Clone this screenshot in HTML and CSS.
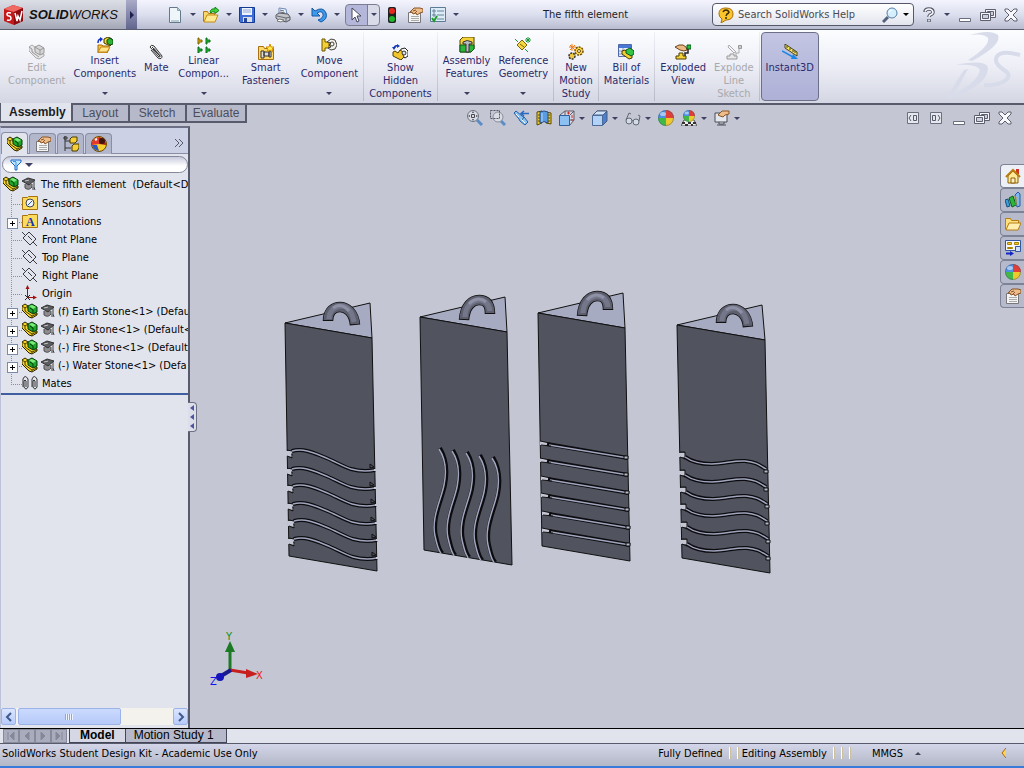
FILE: index.html
```html
<!DOCTYPE html>
<html lang="en">
<head>
    <meta charset="UTF-8">
    <meta name="viewport" content="width=device-width, initial-scale=1.0">
    <title>SolidWorks - The fifth element</title>
    <link rel="stylesheet" href="styles.css">
</head>
<body>
    <!-- Icon sprite -->
    <svg class="sprite" aria-hidden="true">
        <symbol id="asm" viewBox="0 0 16 16">
            <path d="M0 3l3-2 3 2v3l4 4h5v2l-5 3-3-1-7-7z" fill="#f6d42c" stroke="#2b2400"/>
            <path d="M0 3l3 2 3-2M3 5v3l7 5 5-2M10 13v2" fill="none" stroke="#4a3c00"/>
            <path d="M6 3l4-2 5 3v5l-4 2-5-3z" fill="#1fa52b" stroke="#06380a"/>
            <path d="M7 3l3-1 4 2-3 2z" fill="#7bea78"/>
            <path d="M8 5l3 2v3" fill="none" stroke="#06380a"/>
        </symbol>
        <symbol id="asm-off" viewBox="0 0 16 16">
            <path d="M0 3l3-2 3 2v3l4 4h5v2l-5 3-3-1-7-7z" fill="#e6e6e8" stroke="#aaa"/>
            <path d="M6 3l4-2 5 3v5l-4 2-5-3zM6 3l5 3v5M11 6l4-2M0 3l3 2v3l7 5" fill="#d6d6d8" stroke="#999"/>
        </symbol>
        <symbol id="cap" viewBox="0 0 16 16">
            <path d="M4 8v4q4 3 7-1V8" fill="#8d8d90" stroke="#4c4c4e"/>
            <path d="M1 5l6-3 7 2-6 5z" fill="#5c5d61" stroke="#333335"/>
            <path d="M13 5v6l1 3M12 11v3M4 5l4-2" fill="none" stroke="#3c3c3e"/>
            <path d="M4 5l4-1" stroke="#ccc"/>
        </symbol>
        <symbol id="new" viewBox="0 0 16 16">
            <path d="M2.500 .500h8l3 3v12h-11z" fill="#eef6fa" stroke="#647a8a"/>
            <path d="M10.500 .500v3h3M4 14h8" fill="#b9cfe0" stroke="#89a3b6"/>
        </symbol>
        <symbol id="open" viewBox="0 0 16 16">
            <path d="M.500 14.500v-10h4l1 2h6v3" fill="#f8d868" stroke="#b17a10"/>
            <path d="M1 15l3-7h11l-3 7z" fill="#ffe991" stroke="#c48a18"/>
            <path d="M7 5q1-4 5-3V0l4 3.500-4 3V5q-3-1-4 1z" fill="#45cf3c" stroke="#0a8a12"/>
        </symbol>
        <symbol id="save" viewBox="0 0 16 16">
            <path d="M.500 .500h15v15h-14l-1-1z" fill="#3e6fd8" stroke="#123a92"/>
            <path d="M3 1h10v7H3z" fill="#edf3ff"/>
            <path d="M4 3h8M4 5h8" stroke="#95a9d4"/>
            <path d="M4 10h9v5H4z" fill="#d9dde6"/>
            <path d="M5 11h3v4H5z" fill="#24479a"/>
        </symbol>
        <symbol id="print" viewBox="0 0 16 16">
            <path d="M4 1l7 1 1 6-8-1z" fill="#e9f2ff" stroke="#6f8bb5"/>
            <path d="M1 8l3-2 9 1 2 3v3l-4 2-9-3-1-1z" fill="#c2c4ca" stroke="#55585f"/>
            <path d="M2 9l9 2 4-1M11 11v4M5 3l4 1M5 5l5 1" fill="none" stroke="#666a74"/>
            <path d="M4 12l5 1-3 2-4-1z" fill="#fff" stroke="#777"/>
        </symbol>
        <symbol id="undo" viewBox="0 0 16 16">
            <path d="M1 1v8h8L6 6q5-3 6 1 1 4-5 6l3 2q7-3 5-9-3-7-11-2z" fill="#3f9bea" stroke="#1257a8"/>
        </symbol>
        <symbol id="cursor" viewBox="0 0 16 16">
            <path d="M3 1v12l3-3 2 5 2-1-2-5h4z" fill="#fff" stroke="#46465a"/>
        </symbol>
        <symbol id="light" viewBox="0 0 16 16">
            <rect x="4" y="0" width="8" height="16" rx="2" fill="#1d211d"/>
            <circle cx="8" cy="4" r="3" fill="#e8281f"/>
            <circle cx="8" cy="12" r="3" fill="#21b52c"/>
        </symbol>
        <symbol id="props" viewBox="0 0 16 16">
            <path d="M1.500 5.500h12v10h-12z" fill="#f4f4f4" stroke="#77777c"/>
            <path d="M4 9.500h8M4 11.500h8M4 13.500h8" stroke="#aaa"/>
            <path d="M3 5l4-4h6l3 1v3l-3 1-3 2-1-2-3 1-1-2z" fill="#edbd8b" stroke="#8a5526"/>
            <path d="M6 4l3-1M8 6l2-2" stroke="#8a5526"/>
        </symbol>
        <symbol id="options" viewBox="0 0 16 16">
            <path d="M.500 .500h15v14H.500z" fill="#dcebf5" stroke="#5c7b94"/>
            <path d="M3 3h2v2H3zM3 7h2v2H3z" fill="none" stroke="#65839c"/>
            <path d="M7 4h7M7 8h7M7 12h7" stroke="#65839c"/>
            <path d="M2 11l2 3 3-5" fill="none" stroke="#1e9c2b" stroke-width="2"/>
        </symbol>
        <symbol id="bubble" viewBox="0 0 16 16">
            <path d="M8 1C3 1 1 3 1 7q0 3 3 5l-1 4 5-3q7 0 7-6T8 1z" fill="#fbc52c" stroke="#a86f08"/>
            <path d="M5 5q1-2 3-2t3 2q0 1-2 2l-1 2M8 10v2" fill="none" stroke="#3b2b00" stroke-width="1.500"/>
        </symbol>
        <symbol id="lens" viewBox="0 0 16 16">
            <path d="M1 15l5-5" stroke="#53637c" stroke-width="3"/>
            <circle cx="10" cy="6" r="5" fill="#d6efff" stroke="#567ea8"/>
            <path d="M7 6q0-3 3-3" fill="none" stroke="#fff"/>
        </symbol>
        <symbol id="help" viewBox="0 0 16 16">
            <path d="M4 5q0-3 4-3t4 3q0 2-3 3-1 1-1 2M8 12v3" fill="none" stroke="#555866" stroke-width="3.500"/>
            <path d="M4 4.500q1-2.500 4-2.500t4 3q0 2-3 3-1 1-1 2M8 12.500v2" fill="none" stroke="#fafafe" stroke-width="1.500"/>
        </symbol>
        <symbol id="min" viewBox="0 0 16 16">
            <path d="M2.500 11.500h11v3h-11z" fill="#fff" stroke="#696c7a"/>
        </symbol>
        <symbol id="restore" viewBox="0 0 16 16">
            <path d="M5.500 2.500h10v8h-10z" fill="#f6f6fa" stroke="#5c5f6d"/>
            <path d="M7.500 4.500h6v4h-6z" fill="#cdd0dc" stroke="#5c5f6d"/>
            <path d="M.500 5.500h10v8H.500z" fill="#f6f6fa" stroke="#5c5f6d"/>
            <path d="M2.500 7.500h6v4h-6z" fill="#cdd0dc" stroke="#5c5f6d"/>
        </symbol>
        <symbol id="close" viewBox="0 0 16 16">
            <path d="M2 2h3l3 3 3-3h3v2l-4 4 4 4v2h-3l-3-3-3 3H2v-2l4-4-4-4z" fill="#f8f8fc" stroke="#5c5f6d"/>
        </symbol>
        <symbol id="dock-l" viewBox="0 0 16 16">
            <path d="M2.500 2.500h11v11h-11z" fill="#e6e8ef" stroke="#6c707e"/>
            <path d="M8.500 5.500h3v5h-3zM6 5L4 8l2 3" fill="none" stroke="#555968"/>
        </symbol>
        <symbol id="dock-r" viewBox="0 0 16 16">
            <path d="M2.500 2.500h11v11h-11z" fill="#e6e8ef" stroke="#6c707e"/>
            <path d="M4.500 5.500h3v5h-3zM10 5l2 3-2 3" fill="none" stroke="#555968"/>
        </symbol>
        <symbol id="insert" viewBox="0 0 16 16">
            <path d="M1 6Q1 2 4 2" fill="none" stroke="#1230c8" stroke-width="1.500"/>
            <path d="M3 0l3 2-3 3z" fill="#1230c8"/>
            <path d="M7 2l4-2 4 2v5l-2 2-6-3z" fill="#f4d430" stroke="#3c3600"/>
            <path d="M10 3l3-2 3 2v4l-3 1-3-2z" fill="#2eb435" stroke="#0b4a10"/>
            <path d="M1 8h4l1 1h6v3l-2 4H1z" fill="#f8c73c" stroke="#a86a0c"/>
            <path d="M1 15l3-5h9l-3 5z" fill="#ffe48a" stroke="#c08412"/>
        </symbol>
        <symbol id="clip" viewBox="0 0 16 16">
            <path d="M5 5l7 7M3 6l7 8q4 2 4-2L6 2Q3 0 2 3M2 3l9 10q2 0 1-2L4 3" fill="none" stroke="#333"/>
            <path d="M6 4l7 8" stroke="#aaa"/>
        </symbol>
        <symbol id="pattern" viewBox="0 0 16 16">
            <path d="M2 1h1v2h3v2H3v2H2z" fill="#e8bc10" stroke="#806000"/>
            <path d="M10 1h1v2h3v2h-3v2h-1zM2 10h1v2h3v2H3v2H2zM10 10h1v2h3v2h-3v2h-1z" fill="#22c032" stroke="#08701a"/>
        </symbol>
        <symbol id="fasteners" viewBox="0 0 16 16">
            <path d="M.500 15.500v-13h5l1 2h9v11z" fill="#ffd965" stroke="#a8710e"/>
            <path d="M3 7h3v7H3zM6 8h5v4H6zM11 7h2v6h-2z" fill="#dedede" stroke="#333"/>
            <path d="M12 0l1 3 3 0-2 2 1 3-3-2-3 2 1-3-2-2h3z" fill="#fff04a" stroke="#d78b00"/>
        </symbol>
        <symbol id="move" viewBox="0 0 16 16">
            <path d="M1 2h3v3h4v6H4v3H1z" fill="#f3ce35" stroke="#6d5600"/>
            <path d="M6 5l4-3 4 1 2 5-2 4-4 1-3-2 3-1-2-2 2-2z" fill="#f4f0ea" stroke="#444"/>
            <circle cx="11" cy="7" r="2" fill="none" stroke="#444"/>
        </symbol>
        <symbol id="showhide" viewBox="0 0 16 16">
            <path d="M2 4q1-3 4-2" fill="none" stroke="#1636b8" stroke-width="1.500"/>
            <path d="M5 0l3 2-3 2zM0 3h4l-2 3z" fill="#1636b8"/>
            <path d="M9 5l4-1 3 3v5l-3 2-5-4z" fill="#fff" stroke="#222"/>
            <path d="M1 8l2-1 3 2 2-3 3 2v3l1 2-3 3-8-4z" fill="#f2c52d" stroke="#4f3e00"/>
            <circle cx="12" cy="9" r="2" fill="#ddd" stroke="#333"/>
        </symbol>
        <symbol id="features" viewBox="0 0 16 16">
            <path d="M1 3l3-3h11v12l-3 3H1z" fill="#f4d238" stroke="#514000"/>
            <path d="M1 8h14v4l-3 3H1z" fill="#2cb73a" stroke="#0b5818"/>
            <path d="M4 5q4-3 9 0v2h-3v8H7V7H4z" fill="#b9bcc2" stroke="#333"/>
        </symbol>
        <symbol id="refgeo" viewBox="0 0 16 16">
            <path d="M7 3l5 5-5 5-5-5z" fill="#f6d845" stroke="#7c6300"/>
            <path d="M5 7l4 3" stroke="#7c6300"/>
            <path d="M13 0v6M10 3h6M11 1l4 4M15 1l-4 4M0 2l3 3M10 12l3 3" stroke="#189838"/>
        </symbol>
        <symbol id="motion" viewBox="0 0 16 16">
            <circle cx="11" cy="7" r="4" fill="#ffd94c" stroke="#6d4f00" stroke-width="1.500" stroke-dasharray="2 1"/>
            <circle cx="11" cy="7" r="1.500" fill="#fff" stroke="#6d4f00"/>
            <circle cx="4" cy="12" r="3" fill="#f0c840" stroke="#333" stroke-width="1.500" stroke-dasharray="2 1"/>
            <path d="M4 0v7M1 3h7M2 1l5 5M7 1L2 6" stroke="#f27a10"/>
        </symbol>
        <symbol id="bom" viewBox="0 0 16 16">
            <path d="M.500 .500h13v12H.500z" fill="#e9edf8" stroke="#4f69a8"/>
            <path d="M1 1h12v3H1z" fill="#4977d6"/>
            <path d="M1 7h12M1 10h12M5 4v9" stroke="#8193bd"/>
            <path d="M4 7l3-1 7 5v3l-3 1-7-5z" fill="#f2cc30" stroke="#4b3c00"/>
            <path d="M8 6l4-2 4 3v3l-3 2-5-3z" fill="#35c545" stroke="#0b5818"/>
        </symbol>
        <symbol id="explode" viewBox="0 0 16 16">
            <path d="M0 3l4-2h4l3 2 1 3-3 1-4-1z" fill="#ecba84" stroke="#6e4217"/>
            <path d="M12 1h4v4h-4z" fill="#25c33a" stroke="#0b5818"/>
            <path d="M13 5v4h-3v3" fill="none" stroke="#222" stroke-width="1.500"/>
            <path d="M1 15v-3h3V9h4v3h3v3z" fill="#f4d135" stroke="#4b3c00"/>
        </symbol>
        <symbol id="explode-off" viewBox="0 0 16 16">
            <path d="M12.500 1.500h3v3h-3z" fill="#ccc" stroke="#999"/>
            <path d="M3 1l7 7-2 1-6-6zM13 5v4h-3v3" fill="none" stroke="#aaa"/>
            <path d="M1 15v-3h3v-2h4v2h3v3z" fill="#e7e7e9" stroke="#999"/>
        </symbol>
        <symbol id="instant" viewBox="0 0 16 16">
            <path d="M3 0l12 8v4L3 4z" fill="#f7e75e" stroke="#454020"/>
            <path d="M5 2v2M8 4v2M11 6v2M13 7v2" stroke="#454020"/>
            <path d="M0 7l11 6" stroke="#1b86e4" stroke-width="1.500"/>
            <path d="M11 10l5 5-7 0z" fill="#1b86e4"/>
        </symbol>
        <symbol id="zoomfit" viewBox="0 0 16 16">
            <path d="M10 10l5 5" stroke="#5a8cc8" stroke-width="3"/>
            <circle cx="6" cy="6" r="5.500" fill="#d9dce2" stroke="#6e727c"/>
            <path d="M6 1l-1 2h2zM6 11l-1-2h2zM1 6l2-1v2zM11 6L9 5v2z" fill="#454953"/>
            <path d="M4.500 4.500h3v3h-3z" fill="none" stroke="#454953"/>
        </symbol>
        <symbol id="zoomarea" viewBox="0 0 16 16">
            <path d="M11 11l4 4" stroke="#5a8cc8" stroke-width="3"/>
            <circle cx="8" cy="7" r="5" fill="#d9dce2" stroke="#8a8e98"/>
            <path d="M.500 .500h9v8h-9z" fill="none" stroke="#555963" stroke-dasharray="2 1"/>
        </symbol>
        <symbol id="prevview" viewBox="0 0 16 16">
            <path d="M1 3l2-2 6 5 2 1 4 5-3 3-5-4-1-2z" fill="#8cc2f0" stroke="#265f9f"/>
            <path d="M3 4l3 3M8 9l4 4" stroke="#fff"/>
            <path d="M9 10l2-3" stroke="#265f9f"/>
            <path d="M8 3.500h8M11 1L8 3.500 11 6" fill="none" stroke="#2867c4" stroke-width="1.500"/>
        </symbol>
        <symbol id="section" viewBox="0 0 16 16">
            <path d="M1 2l5-1v12l-5 2zM10 2l5 1v11l-5-1z" fill="#f0cb36" stroke="#594800"/>
            <path d="M4 2q4-2 8 0v11q-4-3-8 0z" fill="#5a9ce4" stroke="#234d8d"/>
            <path d="M6 3v9" stroke="#b7d8f8"/>
            <path d="M2 5h2M2 8h2M2 11h2M12 5h2M12 8h2M12 11h2" stroke="#594800"/>
        </symbol>
        <symbol id="orient" viewBox="0 0 16 16">
            <path d="M1 5l5-4h9v9l-4 5H1zM11 5l4-4M6 1v4M15 10h-4" fill="#d5d9e3" stroke="#5c5f6b"/>
            <path d="M.500 5.500h10v10H.500z" fill="#8cc0f2" stroke="#315f9c"/>
            <path d="M8 3h3M13 5v3M12 10h2M9.500 1.500v3" stroke="#d42b2b"/>
        </symbol>
        <symbol id="display" viewBox="0 0 16 16">
            <path d="M1 5l4-4h10v10l-4 4H1z" fill="#4b80cf" stroke="#4b5b7b"/>
            <path d="M1 5l4-4h10l-4 4z" fill="#d0e5fb" stroke="#4b5b7b"/>
            <path d="M.500 5.500h10v10H.500z" fill="#b4d2f5" stroke="#4b6b9b"/>
        </symbol>
        <symbol id="glasses" viewBox="0 0 16 16">
            <circle cx="4" cy="11" r="3" fill="#d4dbe4" stroke="#606876"/>
            <circle cx="11" cy="12" r="3" fill="#d4dbe4" stroke="#606876"/>
            <path d="M1 10l3-7 2 1M7 11q1-1 1 0M14 11l1-5-2-1" fill="none" stroke="#606876"/>
        </symbol>
        <symbol id="ball" viewBox="0 0 16 16">
            <path d="M8 8V0a8 8 0 0 0-8 8z" fill="#4d91e4"/>
            <path d="M8 8V0a8 8 0 0 1 8 8z" fill="#e03e36"/>
            <path d="M8 8H0a8 8 0 0 0 8 8z" fill="#42b847"/>
            <path d="M8 8h8a8 8 0 0 1-8 8z" fill="#edc92e"/>
            <circle cx="8" cy="8" r="7.500" fill="none" stroke="#475a74" stroke-opacity=".5"/>
            <ellipse cx="5" cy="4" rx="3" ry="2" fill="#fff" fill-opacity=".5"/>
        </symbol>
        <symbol id="scene" viewBox="0 0 16 16">
            <path d="M0 16l3-6h10l3 6z" fill="#eee" stroke="#555"/>
            <path d="M1 12h3v2H1zM7 12h3v2H7zM12 12h3v2h-3zM4 14h3v2H4zM10 14h2v2h-2z" fill="#333"/>
            <use href="#ball" x="2" y="0" width="12" height="12"/>
        </symbol>
        <symbol id="viewset" viewBox="0 0 16 16">
            <path d="M1 3h12v9H1zM5 12v2h5v-2M3 15h9" fill="#e4e7ee" stroke="#484c57"/>
            <path d="M4 5l4-4h7v3l-4 1-2 2-3-1z" fill="#edbd8b" stroke="#8a5526"/>
        </symbol>
        <symbol id="tree" viewBox="0 0 16 16">
            <path d="M2 0v15M2 5h6M2 12h6M1 1h3v2H1z" fill="none" stroke="#333"/>
            <path d="M7 3l2-2h5v4l-2 2H7zM9 10l2-2h5v4l-2 3H9z" fill="#f5cf35" stroke="#4a3a00"/>
        </symbol>
        <symbol id="eyeball" viewBox="0 0 16 16">
            <circle cx="8" cy="8" r="7.500" fill="#f4cf2e" stroke="#694700"/>
            <path d="M1 9Q0 2 8 1v7z" fill="#e23a2c"/>
            <path d="M1 9l5 0 2 6Q2 14 1 9z" fill="#2c55c5"/>
            <path d="M8 1q7 1 7 8l-7-1z" fill="#b02018"/>
            <circle cx="11" cy="5" r="3" fill="#40140e"/>
            <path d="M4 4l2-1" stroke="#fff" stroke-width="2"/>
        </symbol>
        <symbol id="funnel" viewBox="0 0 12 12">
            <path d="M1 1h10v2L7 7v4H5V7L1 3z" fill="#c3e5ff" stroke="#1b67c8"/>
            <path d="M3 2.500h3M6 3v5" fill="none" stroke="#3397e8"/>
        </symbol>
        <symbol id="sensor" viewBox="0 0 16 16">
            <path d="M.500 14.500v-12h5l1-1h9v13z" fill="#fbdc5f" stroke="#a8720c"/>
            <circle cx="8" cy="8" r="4" fill="#edf3f8" stroke="#445"/>
            <path d="M6 10l4-4" stroke="#225ab8"/>
        </symbol>
        <symbol id="annot" viewBox="0 0 16 16">
            <path d="M.500 14.500v-12h5l1-1h9v13z" fill="#fbdc5f" stroke="#a8720c"/>
            <text class="annot-letter" x="4" y="13">A</text>
        </symbol>
        <symbol id="plane" viewBox="0 0 16 16">
            <path d="M7 1l7 7-6 6-7-7zM0 1l3 3M11 11l4 4M6 5l4 4" fill="none" stroke="#3b3b44"/>
        </symbol>
        <symbol id="origin" viewBox="0 0 16 16">
            <path d="M5.500 13V3M5 12.500h7" stroke="#a01010"/>
            <path d="M5.500 0l2 4h-4zM15 12.500l-4-2v4z" fill="#a01010"/>
            <path d="M3 10l5 5M8 10l-5 5" stroke="#222"/>
        </symbol>
        <symbol id="mates" viewBox="0 0 16 16">
            <path d="M1 12V4q2-5 5 0v8q-2 4-4 0V6q1-2 2 0v6M10 12V4q2-5 5 0v8q-2 4-4 0V6q1-2 2 0v6" fill="none" stroke="#333"/>
        </symbol>
        <symbol id="home" viewBox="0 0 16 16">
            <path d="M11 1h3v5h-3z" fill="#d43222"/>
            <path d="M3 8l5-5 5 5v7H3z" fill="#ffe99a" stroke="#8c5e08"/>
            <path d="M1 9l7-7 7 7" fill="none" stroke="#b87c10" stroke-width="2"/>
            <path d="M6 10h4v5H6z" fill="#fff3c4" stroke="#8c5e08"/>
        </symbol>
        <symbol id="books" viewBox="0 0 16 16">
            <path d="M0 8l3-1 2 7-3 1z" fill="#3aa0d8" stroke="#154f80"/>
            <path d="M4 6l4-2 3 9-4 2z" fill="#2cb53b" stroke="#0d5f1b"/>
            <path d="M10 3l3-3 2 2v12l-3 1z" fill="#82b6ef" stroke="#285a9f"/>
            <path d="M9 5h2v8" fill="none" stroke="#c8a020"/>
        </symbol>
        <symbol id="folder" viewBox="0 0 16 16">
            <path d="M.500 13.500v-11h5l1 2h7v3" fill="#ffdf7b" stroke="#b57d18"/>
            <path d="M1 14l3-7h12l-3 7z" fill="#ffeeb0" stroke="#b57d18"/>
        </symbol>
        <symbol id="palette" viewBox="0 0 16 16">
            <path d="M.500 .500h15v10H.500z" fill="#f4f6fb" stroke="#33569e"/>
            <path d="M2.500 2.500h4v2h-4zM9.500 2.500h4v2h-4zM2.500 7.500h5v1h-5z" fill="#f2c52d" stroke="#a88400"/>
            <path d="M10.500 6.500h5v5h-5z" fill="#cfe0fa" stroke="#33569e"/>
            <path d="M1 13.500h5" stroke="#1226c5" stroke-width="2"/>
            <path d="M5 11l4 2.500L5 16z" fill="#1226c5"/>
        </symbol>
    </svg>

    <header class="title-bar">
        <div class="brand">
            <svg class="brand-cube" viewBox="0 0 22 22">
                <path d="M1 5l9-4 10 3v13l-9 4-10-4z" fill="#c5181c"/>
                <path d="M1 5l9-4 10 3-9 4z" fill="#ef6a62"/>
                <path d="M11 8l9-4v13l-9 4z" fill="#8e0b10"/>
                <path d="M8 9q-4-1-4 1 0 2 2 2t2 3q-1 2-4 1M12 9l2 8 1-5 2 4 2-9" fill="none" stroke="#fff" stroke-width="1.500"/>
            </svg>
            <span class="brand-name"><b>SOLID</b>WORKS</span>
        </div>
        <button class="brand-toggle" aria-label="Show menu"></button>
        <div class="quick-tools">
            <button aria-label="New"><svg class="icon"><use href="#new"/></svg><i class="arrow"></i></button>
            <button aria-label="Open"><svg class="icon"><use href="#open"/></svg><i class="arrow"></i></button>
            <button aria-label="Save"><svg class="icon"><use href="#save"/></svg><i class="arrow"></i></button>
            <button aria-label="Print"><svg class="icon"><use href="#print"/></svg><i class="arrow"></i></button>
            <button aria-label="Undo"><svg class="icon"><use href="#undo"/></svg><i class="arrow"></i></button>
            <button class="select-tool" aria-label="Select"><svg class="icon"><use href="#cursor"/></svg><i class="arrow"></i></button>
            <button aria-label="Rebuild"><svg class="icon"><use href="#light"/></svg></button>
            <button aria-label="File properties"><svg class="icon"><use href="#props"/></svg></button>
            <button aria-label="Options"><svg class="icon"><use href="#options"/></svg><i class="arrow"></i></button>
        </div>
        <h1 class="doc-title">The fifth element</h1>
        <div class="search">
            <svg class="icon"><use href="#bubble"/></svg>
            <input type="text" id="search" placeholder="Search SolidWorks Help" aria-label="Search SolidWorks Help">
            <button aria-label="Search"><svg class="icon"><use href="#lens"/></svg><i class="arrow dark"></i></button>
        </div>
        <div class="window-tools">
            <button aria-label="Help"><svg class="icon"><use href="#help"/></svg><i class="arrow"></i></button>
            <button aria-label="Minimize"><svg class="icon"><use href="#min"/></svg></button>
            <button aria-label="Restore"><svg class="icon"><use href="#restore"/></svg></button>
            <button aria-label="Close"><svg class="icon"><use href="#close"/></svg></button>
        </div>
    </header>

    <div class="ribbon">
        <button class="tool" disabled><svg class="icon"><use href="#asm-off"/></svg>Edit<br>Component</button>
        <button class="tool menu"><svg class="icon"><use href="#insert"/></svg>Insert<br>Components<i class="arrow"></i></button>
        <button class="tool"><svg class="icon"><use href="#clip"/></svg>Mate</button>
        <button class="tool menu roomy"><svg class="icon"><use href="#pattern"/></svg>Linear<br>Compon...<i class="arrow"></i></button>
        <button class="tool roomy"><svg class="icon"><use href="#fasteners"/></svg>Smart<br>Fasteners</button>
        <button class="tool menu"><svg class="icon"><use href="#move"/></svg>Move<br>Component<i class="arrow"></i></button>
        <span class="divider"></span>
        <button class="tool"><svg class="icon"><use href="#showhide"/></svg>Show<br>Hidden<br>Components</button>
        <span class="divider"></span>
        <button class="tool menu"><svg class="icon"><use href="#features"/></svg>Assembly<br>Features<i class="arrow"></i></button>
        <button class="tool menu"><svg class="icon"><use href="#refgeo"/></svg>Reference<br>Geometry<i class="arrow"></i></button>
        <span class="divider"></span>
        <button class="tool"><svg class="icon"><use href="#motion"/></svg>New<br>Motion<br>Study</button>
        <span class="divider"></span>
        <button class="tool"><svg class="icon"><use href="#bom"/></svg>Bill of<br>Materials</button>
        <span class="divider"></span>
        <button class="tool"><svg class="icon"><use href="#explode"/></svg>Exploded<br>View</button>
        <button class="tool" disabled><svg class="icon"><use href="#explode-off"/></svg>Explode<br>Line<br>Sketch</button>
        <span class="divider"></span>
        <button class="tool pressed"><svg class="icon"><use href="#instant"/></svg>Instant3D</button>
        <svg class="watermark" viewBox="0 0 76 70">
            <path d="M22 5Q42-1 50 5q4 10-26 26l-4-1Q42 16 40 8q-4-5-18-3z" fill="#d8dcea"/>
            <path d="M8 35q30-6 32 3 0 18-42 32 6-12 18-30l4-1Q12 54 6 64q24-12 26-24-3-6-24-5z" fill="#d8dcea"/>
            <path d="M72 25q-22-6-24 4-1 5 8 11 8 5 2 10-8 6-22 5" fill="none" stroke="#d8dcea" stroke-width="4"/>
        </svg>
    </div>

    <div class="command-row">
        <nav class="command-tabs">
            <button class="active">Assembly</button>
            <button>Layout</button>
            <button>Sketch</button>
            <button>Evaluate</button>
        </nav>
        <div class="view-tools">
            <button aria-label="Zoom to fit"><svg class="icon"><use href="#zoomfit"/></svg></button>
            <button aria-label="Zoom to area"><svg class="icon"><use href="#zoomarea"/></svg></button>
            <button aria-label="Previous view"><svg class="icon"><use href="#prevview"/></svg></button>
            <button aria-label="Section view"><svg class="icon"><use href="#section"/></svg></button>
            <button aria-label="View orientation"><svg class="icon"><use href="#orient"/></svg><i class="arrow"></i></button>
            <button aria-label="Display style"><svg class="icon"><use href="#display"/></svg><i class="arrow"></i></button>
            <button aria-label="Hide or show items"><svg class="icon"><use href="#glasses"/></svg><i class="arrow"></i></button>
            <button aria-label="Edit appearance"><svg class="icon"><use href="#ball"/></svg></button>
            <button aria-label="Apply scene"><svg class="icon"><use href="#scene"/></svg><i class="arrow"></i></button>
            <button aria-label="View settings"><svg class="icon"><use href="#viewset"/></svg><i class="arrow"></i></button>
        </div>
        <div class="doc-tools">
            <button aria-label="Dock left"><svg class="icon"><use href="#dock-l"/></svg></button>
            <button aria-label="Dock right"><svg class="icon"><use href="#dock-r"/></svg></button>
            <button aria-label="Minimize document"><svg class="icon"><use href="#min"/></svg></button>
            <button aria-label="Restore document"><svg class="icon"><use href="#restore"/></svg></button>
            <button aria-label="Close document"><svg class="icon"><use href="#close"/></svg></button>
        </div>
    </div>

    <main class="workspace">
        <aside class="panel">
            <div class="panel-tabs">
                <button class="active" aria-label="Feature tree"><svg class="icon"><use href="#asm"/></svg></button>
                <button aria-label="Properties"><svg class="icon"><use href="#props"/></svg></button>
                <button aria-label="Configurations"><svg class="icon"><use href="#tree"/></svg></button>
                <button aria-label="Appearances"><svg class="icon"><use href="#eyeball"/></svg></button>
                <svg class="more" viewBox="0 0 10 8"><path d="M1 0l4 4-4 4M5 0l4 4-4 4" fill="none" stroke="#555968"/></svg>
            </div>
            <button class="filter" aria-label="Filter"><svg class="funnel"><use href="#funnel"/></svg><i class="arrow wide"></i></button>
            <div class="root-row"><svg class="icon"><use href="#asm"/></svg><svg class="icon"><use href="#cap"/></svg><span>The fifth element&nbsp; (Default&lt;Dis</span></div>
            <ul class="tree">
                <li><svg class="icon"><use href="#sensor"/></svg>Sensors</li>
                <li class="closed"><svg class="icon"><use href="#annot"/></svg>Annotations</li>
                <li><svg class="icon"><use href="#plane"/></svg>Front Plane</li>
                <li><svg class="icon"><use href="#plane"/></svg>Top Plane</li>
                <li><svg class="icon"><use href="#plane"/></svg>Right Plane</li>
                <li><svg class="icon"><use href="#origin"/></svg>Origin</li>
                <li class="closed part"><svg class="icon"><use href="#asm"/></svg><svg class="icon"><use href="#cap"/></svg>(f) Earth Stone&lt;1&gt; (Defau</li>
                <li class="closed part"><svg class="icon"><use href="#asm"/></svg><svg class="icon"><use href="#cap"/></svg>(-) Air Stone&lt;1&gt; (Default&lt;</li>
                <li class="closed part"><svg class="icon"><use href="#asm"/></svg><svg class="icon"><use href="#cap"/></svg>(-) Fire Stone&lt;1&gt; (Default</li>
                <li class="closed part"><svg class="icon"><use href="#asm"/></svg><svg class="icon"><use href="#cap"/></svg>(-) Water Stone&lt;1&gt; (Defa</li>
                <li><svg class="icon"><use href="#mates"/></svg>Mates</li>
            </ul>
            <div class="scrollbar">
                <button aria-label="Scroll left"><svg viewBox="0 0 8 10"><path d="M6 1L2 5l4 4" fill="none" stroke="#3f5a8c" stroke-width="2"/></svg></button>
                <span class="thumb"></span>
                <button aria-label="Scroll right"><svg viewBox="0 0 8 10"><path d="M2 1l4 4-4 4" fill="none" stroke="#3f5a8c" stroke-width="2"/></svg></button>
            </div>
            <button class="splitter" aria-label="Collapse panel"><i></i><i></i><i></i></button>
        </aside>

        <section class="viewport">
            <svg class="model" viewBox="190 126 834 602">
                <defs>
                    <g id="ring-front">
                        <path d="M328 321C328 311 334 307 340 307S354 312 355 325" stroke="#111" stroke-width="10.500"/>
                        <path d="M328 320C328 311 334 307 340 307S354 312 355 324" stroke="#5d5f6e" stroke-width="9"/>
                        <path d="M329 319C329 311 335 306 341 306S352 311 354 322" stroke="#74778a" stroke-width="5"/>
                        <path d="M333 308C338 304 344 305 349 311" stroke="#8e91a5" stroke-width="3"/>
                    </g>
                    <g id="ring-back">
                        <path d="M464 320C465 306 472 300 479 300S490 304 490 314" stroke="#111" stroke-width="10.500"/>
                        <path d="M464 319C465 306 472 300 479 300S490 304 490 313" stroke="#5d5f6e" stroke-width="9"/>
                        <path d="M465 317C465 306 473 300 479 300S489 304 490 311" stroke="#74778a" stroke-width="5"/>
                        <path d="M469 304C473 299 480 297 486 302" stroke="#8e91a5" stroke-width="3"/>
                    </g>
                    <g id="cut-earth">
                        <path class="gap" d="M285 451h8l-2 3 2 3-7-1z"/>
                        <path class="edge" d="M287 450l5 1v-2M287 456l5 2v-4"/>
                        <path class="groove" d="M292 451C304 448 314 453 324 457S344 467 351 469 366 472 375 470"/>
                        <path class="groove-fill" d="M292 451C304 448 314 453 324 457S344 467 351 469 366 472 375 470"/>
                        <path class="edge" d="M370 464l4 3-4 1z"/>
                        <path class="gap" d="M374 469h3v2h-3z"/>
                    </g>
                    <g id="cut-air">
                        <path class="groove" d="M440 448C446 458 448 470 445 485S432 518 436 536 441 550 442 553"/>
                        <path class="groove-fill" d="M439 449C445 458 447 470 444 485S431 518 435 536 440 550 441 554"/>
                    </g>
                    <g id="cut-fire">
                        <path class="gap" d="M540 441l9 2 2 3-11-1z"/>
                        <path class="groove" d="M547 444l81 14"/>
                        <path class="groove-fill" d="M549 445l79 13"/>
                        <path class="edge" d="M540 441l10 2M541 445l10 1"/>
                        <path class="chip" d="M624 456h4v3h-4z"/>
                    </g>
                    <g id="cut-water">
                        <path class="gap" d="M678 453h7v4h-6z"/>
                        <path class="edge" d="M680 452h5v5M680 457l5 2"/>
                        <path class="groove" d="M685 457C692 462 700 464 712 464S735 460 745 461 758 464 766 469"/>
                        <path class="groove-fill" d="M685 457C692 462 700 464 712 464S735 460 745 461 758 464 766 469"/>
                        <path class="chip" d="M764 470h4v3h-4z"/>
                    </g>
                </defs>

                <!-- Earth stone -->
                <path class="top" d="M285 323l85-20 2 35z"/>
                <path class="face" d="M285 323l87 15 5 233-88-15z"/>
                <use class="ring" href="#ring-front"/>
                <use href="#cut-earth"/>
                <use href="#cut-earth" y="18"/>
                <use href="#cut-earth" x="1" y="35"/>
                <use href="#cut-earth" x="1" y="53"/>
                <use href="#cut-earth" x="2" y="70"/>
                <use href="#cut-earth" x="2" y="88"/>

                <!-- Air stone -->
                <path class="top" d="M420 317l85-20 2 35z"/>
                <path class="face" d="M420 317l87 15 5 233-88-15z"/>
                <use class="ring" href="#ring-back"/>
                <use href="#cut-air"/>
                <use href="#cut-air" x="13" y="2"/>
                <use href="#cut-air" x="27" y="4"/>
                <use href="#cut-air" x="40" y="7"/>
                <use href="#cut-air" x="53" y="9"/>

                <!-- Fire stone -->
                <path class="top" d="M538 313l85-20 2 35z"/>
                <path class="face" d="M538 313l87 15 5 233-88-15z"/>
                <use class="ring" href="#ring-back" x="118" y="-4"/>
                <use href="#cut-fire"/>
                <use href="#cut-fire" y="17"/>
                <use href="#cut-fire" x="1" y="35"/>
                <use href="#cut-fire" x="1" y="52"/>
                <use href="#cut-fire" x="2" y="70"/>
                <use href="#cut-fire" x="2" y="87"/>

                <!-- Water stone -->
                <path class="top" d="M677 325l85-20 3 35z"/>
                <path class="face" d="M677 325l88 15 5 233-88-15z"/>
                <use class="ring" href="#ring-front" x="393" y="2"/>
                <use href="#cut-water"/>
                <use href="#cut-water" y="18"/>
                <use href="#cut-water" x="1" y="35"/>
                <use href="#cut-water" x="1" y="52"/>
                <use href="#cut-water" x="2" y="70"/>
                <use href="#cut-water" x="2" y="87"/>

                <!-- Axis triad -->
                <path d="M230 670v-20" stroke="#1c7a24" stroke-width="3"/>
                <path d="M230 641l5 11h-10z" fill="#1c7a24"/>
                <path d="M230 670l18 3" stroke="#c81e1e" stroke-width="3"/>
                <path d="M246 669l12 5-12 4z" fill="#c81e1e"/>
                <path d="M231 670l-10 6" stroke="#1a1a8c" stroke-width="4"/>
                <circle cx="220" cy="677" r="4" fill="#1414b8"/>
                <text class="axis axis-y" x="226" y="640">Y</text>
                <text class="axis axis-x" x="256" y="679">X</text>
                <text class="axis axis-z" x="210" y="685">Z</text>
            </svg>
            <nav class="task-pane">
                <button class="active" aria-label="Resources"><svg class="icon"><use href="#home"/></svg></button>
                <button aria-label="Design library"><svg class="icon"><use href="#books"/></svg></button>
                <button aria-label="File explorer"><svg class="icon"><use href="#folder"/></svg></button>
                <button aria-label="View palette"><svg class="icon"><use href="#palette"/></svg></button>
                <button aria-label="Appearances and scenes"><svg class="icon"><use href="#ball"/></svg></button>
                <button aria-label="Custom properties"><svg class="icon"><use href="#props"/></svg></button>
            </nav>
        </section>
    </main>

    <nav class="sheet-tabs">
        <div class="sheet-nav">
            <button aria-label="First"><svg viewBox="0 0 10 10"><path d="M2 1v8M8 1L4 5l4 4z"/></svg></button>
            <button aria-label="Previous"><svg viewBox="0 0 10 10"><path d="M7 1L3 5l4 4z"/></svg></button>
            <button aria-label="Next"><svg viewBox="0 0 10 10"><path d="M3 1l4 4-4 4z"/></svg></button>
            <button aria-label="Last"><svg viewBox="0 0 10 10"><path d="M8 1v8M2 1l4 4-4 4z"/></svg></button>
        </div>
        <button class="sheet active">Model</button>
        <button class="sheet">Motion Study 1</button>
    </nav>

    <footer class="status-bar">
        <span class="message">SolidWorks Student Design Kit - Academic Use Only</span>
        <span>Fully Defined</span>
        <i class="tick"></i><i class="tick"></i>
        <span>Editing Assembly</span>
        <i class="tick"></i><i class="tick"></i><i class="tick"></i>
        <button class="units">MMGS<i class="arrow up"></i></button>
        <svg class="tag" viewBox="0 0 5 10"><path d="M5 0L1 5l4 5" fill="#ffd34a" stroke="#a86a0c"/></svg>
    </footer>
</body>
</html>
```

FILE: styles.css
```css
* {
    box-sizing: border-box;
}

body {
    margin: 0;
    min-height: 100vh;
    display: flex;
    flex-direction: column;
    font-family: 'DejaVu Sans Condensed', 'DejaVu Sans', sans-serif;
    font-size: 11px;
    line-height: 13px;
    color: #000;
    background-color: #c4c7d3;
}

button {
    margin: 0;
    padding: 0;
    border: 0;
    background: none;
    font: inherit;
    color: inherit;
    display: flex;
    align-items: center;
}

.sprite {
    display: none;
}

.icon {
    width: 16px;
    height: 16px;
    flex: none;
    display: block;
}

.arrow {
    border: 3px solid transparent;
    border-top-color: #3d4060;
    border-bottom: 0;
    flex: none;
}

.arrow.dark {
    border-top-color: #000;
}

.arrow.wide {
    border-width: 4px;
    border-bottom: 0;
}

.arrow.up {
    border-top: 0;
    border-bottom: 3px solid #44475a;
}

/* Title bar */
.title-bar {
    display: flex;
    align-items: center;
    height: 30px;
    background: linear-gradient(#f3f4fd, #dcdfee 50%, #b9bdd0);
    border-bottom: 1px solid #5b5e70;
}

.brand {
    display: flex;
    align-items: center;
    gap: 4px;
    width: 126px;
    height: 29px;
    padding-left: 3px;
    background: linear-gradient(#dcdee6, #bfc2cd 60%, #a3a7b6);
}

.brand-cube {
    width: 22px;
    height: 22px;
}

.brand-name {
    font: italic 13px 'Liberation Sans', sans-serif;
    color: #111;
}

.brand-toggle {
    width: 11px;
    height: 29px;
    justify-content: center;
    background: linear-gradient(#a9abc8, #62658e);
}

.brand-toggle::before {
    content: "";
    border: 4px solid transparent;
    border-left-color: #1d2050;
    border-right: 0;
}

.quick-tools {
    display: flex;
    align-items: center;
    gap: 7px;
    padding-left: 30px;
}

.quick-tools button {
    gap: 7px;
}

.quick-tools .select-tool {
    width: 35px;
    height: 22px;
    margin: 0 -3px 0 -2px;
    padding: 0 3px;
    gap: 6px;
    border: 1px solid #7b7e92;
    border-radius: 4px;
    background: linear-gradient(90deg, #b4b6da 21px, #7b7e92 21px, #7b7e92 22px, #d9dbe8 22px);
}

.doc-title {
    flex: 1;
    margin: 0;
    text-align: center;
    font-size: 11px;
    font-weight: normal;
    color: #1c1c28;
}

.search {
    display: flex;
    align-items: center;
    gap: 4px;
    width: 202px;
    height: 23px;
    padding: 0 4px 0 5px;
    border: 1px solid #55586a;
    border-radius: 4px;
    background: linear-gradient(#fff, #e3e5ee);
}

.search input {
    flex: 1;
    min-width: 0;
    padding: 0;
    border: 0;
    background: none;
    font: inherit;
}

.search input::placeholder {
    color: #4a4a52;
}

.search button {
    gap: 5px;
}

.window-tools {
    display: flex;
    gap: 7px;
    padding: 0 5px 0 7px;
}

.window-tools button {
    gap: 7px;
}

/* Ribbon */
.ribbon {
    display: flex;
    height: 73px;
    padding-left: 4px;
    color: #2b2a6c;
    background: linear-gradient(#fcfdff, #eff0f7 45%, #d4d6e3);
}

.tool {
    flex-direction: column;
    padding: 14px 4px 0;
}

.tool.roomy {
    min-width: 62px;
}

.tool .icon {
    margin-bottom: 1px;
}

.tool.menu {
    padding-top: 7px;
}

.tool .arrow {
    margin-top: 12px;
}

.tool:disabled {
    color: #a9a9ac;
}

.tool.pressed {
    height: 69px;
    margin-top: 2px;
    padding-top: 11px;
    border: 1px solid #6c6f88;
    border-radius: 4px;
    background: linear-gradient(#c3c5e3, #aeb0d6);
}

.divider {
    width: 1px;
    margin: 2px 1px;
    background: linear-gradient(#f0f0f6, #b6b9c8);
}

.watermark {
    width: 76px;
    height: 70px;
    margin-left: auto;
}

/* Command tabs and view tools */
.command-row {
    display: flex;
    align-items: flex-start;
    height: 23px;
    border-top: 2px solid #585b6c;
    background-color: #c4c7d3;
}

.command-tabs {
    display: flex;
    font: 12px/16px 'Liberation Sans', sans-serif;
    color: #4c4e5a;
}

.command-tabs button {
    min-width: 57px;
    height: 18px;
    padding: 0 6px;
    justify-content: center;
    border: 2px solid #585b6c;
    border-width: 0 2px 2px 0;
    background-color: #b6b9ca;
}

.command-tabs .active {
    height: 20px;
    margin-top: -2px;
    padding: 0 5px 0 8px;
    border-left-width: 1px;
    font-weight: bold;
    color: #1c1c24;
    background-color: #e1e4ed;
}

.view-tools {
    display: flex;
    gap: 7px;
    margin-left: auto;
    padding: 5px 0 0 54px;
}

.view-tools button {
    gap: 4px;
}

.doc-tools {
    display: flex;
    gap: 7px;
    margin-left: auto;
    padding: 5px 11px 0 0;
}

/* Feature tree panel */
.workspace {
    flex: 1;
    display: flex;
    background-color: #c4c7d3;
}

.panel {
    position: relative;
    display: flex;
    flex-direction: column;
    width: 190px;
    border-left: 1px solid #bcc3da;
    border-right: 2px solid #585b6c;
    border-top: 2px solid #6d7084;
    background-color: #e1e4ed;
}

.panel-tabs {
    display: flex;
    align-items: center;
    gap: 1px;
    height: 26px;
    padding: 5px 4px 0 0;
    border-bottom: 1px solid #8a8ea5;
    background-color: #ccd1e6;
}

.panel-tabs button {
    width: 27px;
    height: 21px;
    justify-content: center;
    border: 1px solid #8a8ea5;
    border-bottom: 0;
    border-radius: 4px 4px 0 0;
    background-color: #b3b7cc;
}

.panel-tabs .active {
    height: 22px;
    background-color: #e1e4ed;
}

.more {
    width: 10px;
    height: 8px;
    margin-left: auto;
}

.filter {
    height: 17px;
    margin: 2px 0 2px 1px;
    padding-left: 7px;
    gap: 3px;
    border: 1px solid #858898;
    border-radius: 9px;
    background: linear-gradient(#c8cbdc, #fff 60%);
}

.funnel {
    width: 12px;
    height: 12px;
}

.root-row {
    display: flex;
    align-items: center;
    gap: 2px;
    height: 19px;
    padding: 0 0 1px 2px;
    overflow: hidden;
    white-space: nowrap;
}

.root-row span {
    padding-left: 2px;
}

.tree {
    margin: 0;
    padding: 0 0 1px;
    list-style: none;
    border-bottom: 2px solid #3f5fa0;
}

.tree li {
    position: relative;
    display: flex;
    align-items: center;
    gap: 4px;
    height: 18px;
    padding-left: 21px;
    overflow: hidden;
    white-space: nowrap;
}

.tree .part {
    gap: 2px;
}

/* dotted branch lines */
.tree li::before {
    content: "";
    position: absolute;
    left: 10px;
    top: 0;
    width: 10px;
    height: 10px;
    border: 1px dotted #8e8e88;
    border-width: 0 0 1px 1px;
}

.tree li:not(:last-child) {
    background: repeating-linear-gradient(#9c9c98 0 1px, transparent 1px 2px) 10px 0 / 1px 100% no-repeat;
}

.tree .closed::after {
    content: "";
    position: absolute;
    left: 6px;
    top: 6px;
    width: 9px;
    height: 9px;
    border: 1px solid #7b8ba5;
    background: linear-gradient(#000, #000) center / 5px 1px no-repeat, linear-gradient(#000, #000) center / 1px 5px no-repeat, #fff;
}

.annot-letter {
    font: bold 12px 'Liberation Serif', serif;
    fill: #1334b8;
}

.scrollbar {
    display: flex;
    height: 17px;
    margin-top: auto;
    margin-bottom: 3px;
    background-color: #f3f2ec;
}

.scrollbar button {
    width: 15px;
    justify-content: center;
    border: 1px solid #9bb3e8;
    border-radius: 2px;
    background: linear-gradient(#dbe5ff, #b7cbfa);
}

.scrollbar button:last-child {
    margin-left: auto;
}

.scrollbar button svg {
    width: 8px;
    height: 10px;
}

.thumb {
    width: 55%;
    margin-left: 2px;
    border: 1px solid #9bb3e8;
    border-radius: 2px;
    background: repeating-linear-gradient(90deg, #8ba6e4 0 1px, #eef4ff 1px 2px) center / 8px 6px no-repeat, linear-gradient(#cbdafe, #b5c9f8);
}

.splitter {
    position: absolute;
    right: -9px;
    top: 274px;
    width: 9px;
    height: 30px;
    flex-direction: column;
    justify-content: space-around;
    border: 1px solid #6d7084;
    border-left: 0;
    border-radius: 0 4px 4px 0;
    background-color: #dcdfea;
}

.splitter i {
    border: 3px solid transparent;
    border-right: 4px solid #5054a0;
    border-left: 0;
}

/* Model view */
.viewport {
    position: relative;
    flex: 1;
    min-width: 0;
}

.model {
    display: block;
    width: 100%;
    height: auto;
}

.top {
    fill: #a6abc2;
    stroke: #111;
}

.face {
    fill: #51535f;
    stroke: #111;
}

.ring {
    fill: none;
}

.gap {
    fill: #c4c7d3;
}

.edge {
    fill: none;
    stroke: #111;
}

.groove {
    fill: none;
    stroke: #0c0c10;
    stroke-width: 4;
}

.groove-fill {
    fill: none;
    stroke: #a2a6bd;
    stroke-width: 1.5;
}

.chip {
    fill: #b5b9cc;
    stroke: #111;
    stroke-width: 1;
}

.axis {
    font-size: 11px;
}

.axis-x {
    fill: #f01818;
}

.axis-y {
    fill: #109018;
}

.axis-z {
    fill: #1010f0;
}

.task-pane {
    position: absolute;
    right: 0;
    top: 38px;
}

.task-pane button {
    width: 24px;
    height: 24px;
    justify-content: center;
    border: 1px solid #7d8296;
    border-right: 0;
    border-radius: 4px 0 0 4px;
    background-color: #b6bacb;
}

.task-pane .active {
    background-color: #eef0f7;
}

/* Sheet tabs */
.sheet-tabs {
    display: flex;
    height: 15px;
    border-top: 1px solid #000;
    background-color: #e1e4ed;
    font: 12px/13px 'Liberation Sans', sans-serif;
}

.sheet-nav {
    display: flex;
    padding-left: 3px;
}

.sheet-nav button {
    width: 16px;
    justify-content: center;
    border: 1px solid #878a9a;
    background-color: #a9acbc;
}

.sheet-nav svg {
    width: 10px;
    height: 10px;
    fill: #858898;
    stroke: #858898;
}

.sheet {
    padding: 0 12px 0 8px;
    border: 1px solid #44475a;
    border-top: 0;
    border-left: 0;
    background-color: #b6b9ca;
}

.sheet.active {
    margin-left: 2px;
    padding: 0 10px;
    border-left: 1px solid #44475a;
    font-weight: bold;
    background-color: #d5d8e4;
}

/* Status bar */
.status-bar {
    display: flex;
    align-items: center;
    gap: 3px;
    height: 25px;
    padding: 0 18px 4px 2px;
    border-top: 1px solid #585b6c;
    border-bottom: 2px solid #3a7ad8;
    background: linear-gradient(#d3d6e8, #b4b7c6);
}

.message {
    margin-right: auto;
}

.tick {
    width: 2px;
    height: 12px;
    margin-left: 3px;
    background: linear-gradient(90deg, #fff 50%, #c9bf9c 50%);
}

.units {
    gap: 12px;
    padding: 0 77px 0 18px;
}

.tag {
    width: 5px;
    height: 10px;
}
```
